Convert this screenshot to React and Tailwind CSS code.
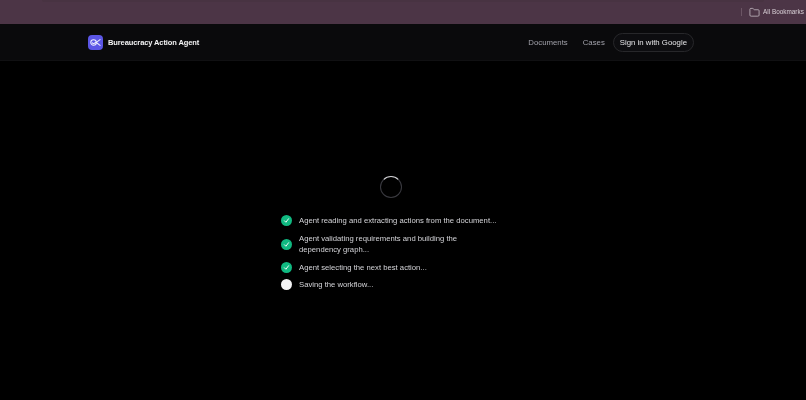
import React from "react";
import { Folder } from "lucide-react";

const Check = () => (
  <div className="flex h-[11px] w-[11px] shrink-0 items-center justify-center rounded-full bg-[#10b981]">
    <svg viewBox="0 0 12 12" className="h-[7px] w-[7px]" fill="none" stroke="#fff" strokeWidth="1.6" strokeLinecap="round" strokeLinejoin="round">
      <path d="M2.5 6.5 5 9l4.5-6" />
    </svg>
  </div>
);

const Pending = () => <div className="h-[11px] w-[11px] shrink-0 rounded-full bg-[#f4f4f5]" />;

const Step = ({ done, children }) => (
  <li className="flex items-center gap-[7px]">
    {done ? <Check /> : <Pending />}
    <span className="text-[7.7px] leading-[11.5px] text-[#d4d4d8]">{children}</span>
  </li>
);

export default function App() {
  return (
    <div className="flex h-[400px] w-[806px] flex-col overflow-hidden bg-black font-['Liberation_Sans',sans-serif] [will-change:transform]">
      <div className="flex h-[24px] shrink-0 flex-col bg-[#4c3546]">
        <div className="mx-[42px] h-[2px] shrink-0 rounded-b-[2px] bg-[#483342]" />
        <div className="flex flex-1 items-center justify-end pb-[2px]">
          <div className="mr-[7px] h-[8px] w-px bg-[#6b5564]" />
          <Folder className="mr-[3px] h-[11px] w-[11px] text-[#d8d0d6]" strokeWidth={1.5} />
          <span className="w-[43px] whitespace-nowrap text-[6.4px] text-[#d8d0d6]">All Bookmarks</span>
        </div>
      </div>
      <header className="flex h-[37px] shrink-0 items-center justify-between border-b border-[#101012] bg-[#0a0a0c] pt-[1px] pl-[88px] pr-[112px]">
        <div className="flex items-center gap-[5px]">
          <div className="flex h-[15px] w-[15px] items-center justify-center rounded-[4px] bg-[#5b56e6]">
            <svg viewBox="0 0 16 16" className="h-[13px] w-[13px]" fill="none" stroke="#eef0ff" strokeWidth="1.3" strokeLinecap="round" strokeLinejoin="round">
              <circle cx="5.6" cy="8" r="3.4" />
              <path d="M4.2 8.4 5.4 9.6 9 7.8l4.6-3.3M9 8l4.6 3.5" />
            </svg>
          </div>
          <span className="text-[7.5px] font-bold tracking-[-0.1px] text-[#f4f4f5]">Bureaucracy Action Agent</span>
        </div>
        <nav className="flex items-center gap-[15px] text-[7.8px] text-[#a1a1aa]">
          <span>Documents</span>
          <div className="flex items-center gap-[8px]">
            <span>Cases</span>
            <div className="flex h-[19px] items-center rounded-full border border-[#27272a] bg-[#0d0d10] px-[6px] text-[#e4e4e7]">Sign in with Google</div>
          </div>
        </nav>
      </header>
      <main className="flex flex-1 flex-col items-center pt-[115px] pr-[24px]">
        <div className="h-[22px] w-[22px] rounded-full border border-[#3a3a40] border-t-[#d4d4d8]" />
        <ul className="mt-[17px] flex w-[220px] flex-col gap-[6px]">
          <Step done>Agent reading and extracting actions from the document...</Step>
          <Step done>Agent validating requirements and building the dependency graph...</Step>
          <Step done>Agent selecting the next best action...</Step>
          <Step>Saving the workflow...</Step>
        </ul>
      </main>
    </div>
  );
}
